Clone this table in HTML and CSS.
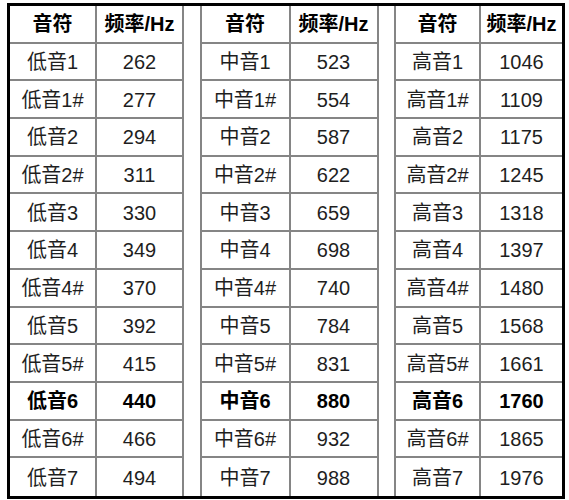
FILE: index.html
```html
<!DOCTYPE html>
<html lang="zh">
<head>
<meta charset="utf-8">
<title>音符频率表</title>
<link rel="stylesheet" href="styles.css">
</head>
<body>
<div class="frame">
  <div class="group g1">
    <div class="cell head">音符</div><div class="cell head">频率/Hz</div>
    <div class="cell">低音1</div><div class="cell">262</div>
    <div class="cell">低音1#</div><div class="cell">277</div>
    <div class="cell">低音2</div><div class="cell">294</div>
    <div class="cell">低音2#</div><div class="cell">311</div>
    <div class="cell">低音3</div><div class="cell">330</div>
    <div class="cell">低音4</div><div class="cell">349</div>
    <div class="cell">低音4#</div><div class="cell">370</div>
    <div class="cell">低音5</div><div class="cell">392</div>
    <div class="cell">低音5#</div><div class="cell">415</div>
    <div class="cell bold">低音6</div><div class="cell bold">440</div>
    <div class="cell">低音6#</div><div class="cell">466</div>
    <div class="cell last">低音7</div><div class="cell last">494</div>
  </div>
  <div class="group g2">
    <div class="cell head">音符</div><div class="cell head">频率/Hz</div>
    <div class="cell">中音1</div><div class="cell">523</div>
    <div class="cell">中音1#</div><div class="cell">554</div>
    <div class="cell">中音2</div><div class="cell">587</div>
    <div class="cell">中音2#</div><div class="cell">622</div>
    <div class="cell">中音3</div><div class="cell">659</div>
    <div class="cell">中音4</div><div class="cell">698</div>
    <div class="cell">中音4#</div><div class="cell">740</div>
    <div class="cell">中音5</div><div class="cell">784</div>
    <div class="cell">中音5#</div><div class="cell">831</div>
    <div class="cell bold">中音6</div><div class="cell bold">880</div>
    <div class="cell">中音6#</div><div class="cell">932</div>
    <div class="cell last">中音7</div><div class="cell last">988</div>
  </div>
  <div class="group g3">
    <div class="cell head">音符</div><div class="cell head">频率/Hz</div>
    <div class="cell">高音1</div><div class="cell">1046</div>
    <div class="cell">高音1#</div><div class="cell">1109</div>
    <div class="cell">高音2</div><div class="cell">1175</div>
    <div class="cell">高音2#</div><div class="cell">1245</div>
    <div class="cell">高音3</div><div class="cell">1318</div>
    <div class="cell">高音4</div><div class="cell">1397</div>
    <div class="cell">高音4#</div><div class="cell">1480</div>
    <div class="cell">高音5</div><div class="cell">1568</div>
    <div class="cell">高音5#</div><div class="cell">1661</div>
    <div class="cell bold">高音6</div><div class="cell bold">1760</div>
    <div class="cell">高音6#</div><div class="cell">1865</div>
    <div class="cell last">高音7</div><div class="cell last">1976</div>
  </div>
</div>
</body>
</html>
```
FILE: styles.css
```css
html, body {
  margin: 0;
  padding: 0;
  background: #fff;
}
body {
  font-family: "Liberation Sans", "Noto Sans CJK SC", sans-serif;
  color: #1e1e1e;
}
.frame {
  margin: 3px 0 0 7px;
  width: 552px;
  height: 490px;
  border: 3px solid #000;
  display: flex;
  justify-content: space-between;
}
.group {
  display: grid;
  grid-template-rows: repeat(13, 1fr);
  height: 490px;
}
.g1 { grid-template-columns: 87px 87px; }
.g2 { grid-template-columns: 89px 88px; border-left: 2px solid #858585; }
.g3 { grid-template-columns: 85px 81px; border-left: 2px solid #858585; }
.cell {
  box-sizing: border-box;
  border-right: 2px solid #858585;
  border-bottom: 2px solid #858585;
  display: flex;
  align-items: center;
  justify-content: center;
  font-size: 20px;
  line-height: 1;
  padding-top: 1px;
}
.g3 .cell:nth-child(2n) { border-right: none; }
.cell.last { border-bottom: none; }
.head {
  font-weight: bold;
  color: #000;
}
.bold {
  font-weight: bold;
  color: #000;
}
```
